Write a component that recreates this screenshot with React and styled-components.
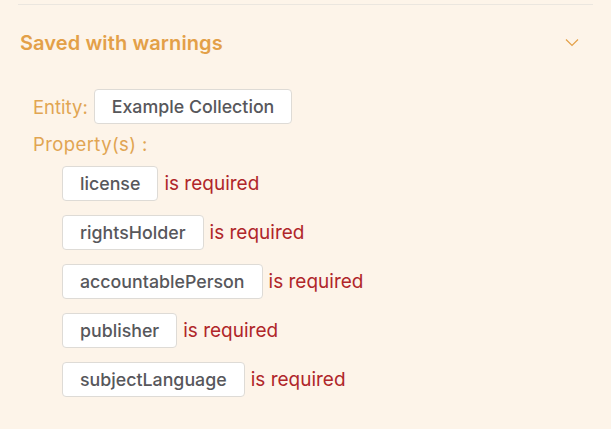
import styled, { createGlobalStyle } from "styled-components";

const GlobalStyle = createGlobalStyle`
  html, body {
    margin: 0;
    padding: 0;
    background: #fdf4e9;
  }
  body {
    font-family: "Inter", "Liberation Sans", sans-serif;
  }
`;

const Panel = styled.section`
  width: 611px;
  height: 429px;
  box-sizing: border-box;
  padding: 4px 18px 0 18px;
  background: #fdf4e9;
  overflow: hidden;
`;

const Divider = styled.div`
  height: 1px;
  background: #ebe6df;
`;

const Header = styled.div`
  display: flex;
  align-items: center;
  justify-content: space-between;
  padding: 25px 14px 0 2px;
  height: 25px;
`;

const Title = styled.h2`
  margin: 0;
  font-size: 20px;
  font-weight: 600;
  color: #e3a048;
  letter-spacing: 0.1px;
`;

const Body = styled.div`
  padding: 34px 0 0 15px;
  display: flex;
  flex-direction: column;
`;

const Line = styled.div`
  display: flex;
  align-items: center;
  gap: 6px;
`;

const Label = styled.span`
  font-size: 18.5px;
  color: #e1a552;
`;

const Tag = styled.span`
  display: inline-flex;
  align-items: center;
  height: 35px;
  box-sizing: border-box;
  padding: 0 17px;
  background: #fff;
  border: 1px solid #dedbd6;
  border-radius: 4px;
  font-size: 17.8px;
  font-weight: 500;
  color: #57575b;
`;

const PropLabel = styled(Label)`
  margin-top: 9px;
  letter-spacing: 0.4px;
`;

const List = styled.div`
  display: flex;
  flex-direction: column;
  gap: 14px;
  padding: 11px 0 0 29px;
`;

const Required = styled.span`
  font-size: 19px;
  color: #b0262a;
`;

const Chevron = () => (
  <svg width="14" height="9" viewBox="0 0 14 9" fill="none">
    <path d="M1 1.5 L7 7.5 L13 1.5" stroke="#e3a048" strokeWidth="1.2" />
  </svg>
);

const missing = [
  "license",
  "rightsHolder",
  "accountablePerson",
  "publisher",
  "subjectLanguage",
];

export default function App() {
  return (
    <Panel>
      <GlobalStyle />
      <Divider />
      <Header>
        <Title>Saved with warnings</Title>
        <Chevron />
      </Header>
      <Body>
        <Line>
          <Label>Entity:</Label>
          <Tag>Example Collection</Tag>
        </Line>
        <PropLabel>Property(s) :</PropLabel>
        <List>
          {missing.map((name) => (
            <Line key={name}>
              <Tag>{name}</Tag>
              <Required>is required</Required>
            </Line>
          ))}
        </List>
      </Body>
    </Panel>
  );
}
